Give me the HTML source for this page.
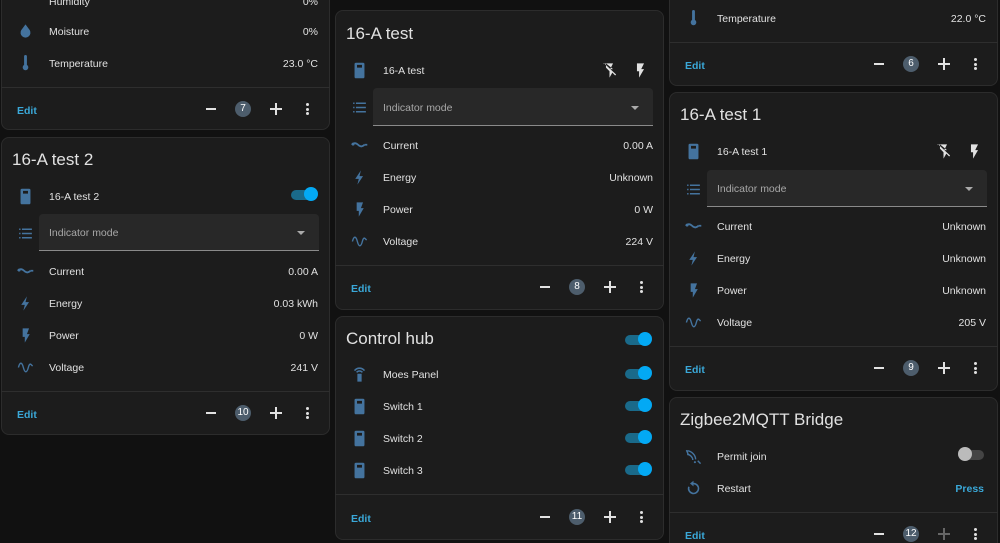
<!DOCTYPE html>
<html><head><meta charset="utf-8"><style>
html,body{margin:0;width:1000px;height:543px;overflow:hidden}
body{background:#111;font-family:"Liberation Sans",sans-serif;color:#e1e1e1;position:relative}
.c{position:absolute;background:#1c1c1c;border:1px solid #2c2c2c;border-radius:8px;box-sizing:border-box}
.d{position:absolute;height:1px;background:#2e2e2e}
.t{position:absolute;font-size:10.5px;line-height:14px;height:14px;white-space:nowrap;margin-top:2px}
.v{position:absolute;font-size:10.5px;line-height:14px;height:14px;text-align:right;white-space:nowrap;margin-top:2px}
.h{position:absolute;font-size:17px;line-height:20px;white-space:nowrap}
.e{position:absolute;font-size:10.5px;line-height:14px;color:#3aa8d8;font-weight:bold;margin-top:2px}
.i{position:absolute;width:17px;height:17px;margin-top:1px}
.dd{position:absolute;background:#282828;border-bottom:1px solid #8a8a8a;border-radius:4px 4px 0 0;box-sizing:border-box}
.dd span{position:absolute;left:10px;top:50%;margin-top:-6px;font-size:10.5px;line-height:14px;color:#a8a8a8}
.dd b{position:absolute;right:14px;top:50%;margin-top:-1px;border-left:4px solid transparent;border-right:4px solid transparent;border-top:4px solid #aaa}
.tg{position:absolute;width:26px;height:12px}
.tg:before{content:"";position:absolute;left:0;top:1px;width:24px;height:10px;border-radius:5px;background:#1a6a8a}
.tg:after{content:"";position:absolute;right:-1px;top:-2px;width:14px;height:14px;border-radius:50%;background:#03a9f4}
.tg.off:before{background:#444}
.tg.off:after{right:auto;left:-2px;background:#bbb}
.m{position:absolute;width:10px;height:1.5px;background:#e1e1e1}
.p{position:absolute;width:12px;height:12px}
.p:before{content:"";position:absolute;left:0;top:5px;width:12px;height:1.5px;background:#e1e1e1}
.p:after{content:"";position:absolute;left:5.25px;top:0;width:1.5px;height:12px;background:#e1e1e1}
.p.dim:before,.p.dim:after{background:#666}
.bd{position:absolute;width:16px;height:16px;border-radius:50%;background:#4d5d6c;font-size:10px;line-height:16px;text-align:center;color:#fff}
.k{position:absolute;width:3px;height:12px}
.k i{display:block;width:3px;height:3px;border-radius:50%;background:#e1e1e1;margin-bottom:1.5px}
</style></head><body>
<svg width="0" height="0" style="position:absolute"><defs>
<symbol id="sw" viewBox="0 0 24 24"><path fill="#44739e" d="M7 1h10a2 2 0 0 1 2 2v18a2 2 0 0 1-2 2H7a2 2 0 0 1-2-2V3a2 2 0 0 1 2-2zm1.5 3v4h7V4z"/></symbol>
<symbol id="ls" viewBox="0 0 24 24"><path fill="#44739e" d="M3 5h2v2H3zm4 0h14v2H7zM3 11h2v2H3zm4 0h14v2H7zM3 17h2v2H3zm4 0h14v2H7z"/></symbol>
<symbol id="cu" viewBox="0 0 24 24"><path fill="none" stroke="#44739e" stroke-width="2.5" d="M1 11c3-3 6-3 9 0s6 3 9 0M19 11h4"/><circle cx="3" cy="10" r="2" fill="#44739e"/></symbol>
<symbol id="fl" viewBox="0 0 24 24"><path fill="#44739e" d="M14 2L6 14h5l-2 8 8-12h-5z"/></symbol>
<symbol id="fl2" viewBox="0 0 24 24"><path fill="#44739e" d="M8 2v12h3v8l7-12h-4l3-8z"/></symbol>
<symbol id="fw" viewBox="0 0 24 24"><path fill="#e1e1e1" d="M7 2v11h3v9l7-12h-4l4-8z"/></symbol>
<symbol id="fo" viewBox="0 0 24 24"><path fill="#e1e1e1" d="M7 2v6l5 5v9l4-7 4 4 1.3-1.3L4.3 1.7 3 3zm10 8h-4l4-8H7z"/></symbol>
<symbol id="si" viewBox="0 0 24 24"><path fill="none" stroke="#44739e" stroke-width="2" d="M2 12c2-8 5-8 7 0s5 8 7 0 4-4 6-2"/></symbol>
<symbol id="th" viewBox="0 0 24 24"><path fill="#44739e" d="M10 2a2 2 0 0 1 4 0v12a4 4 0 1 1-4 0z"/></symbol>
<symbol id="dr" viewBox="0 0 24 24"><path fill="#44739e" d="M12 2l6 8a7 7 0 1 1-12 0z"/></symbol>
<symbol id="rm" viewBox="0 0 24 24"><path fill="#44739e" d="M12 2a10 10 0 0 1 8 4l-2 1a8 8 0 0 0-12 0L4 6a10 10 0 0 1 8-4zm0 4a6 6 0 0 1 5 2.5l-2 1a4 4 0 0 0-6 0l-2-1A6 6 0 0 1 12 6zM9 11h6v11H9z"/></symbol>
<symbol id="zb" viewBox="0 0 24 24"><path fill="none" stroke="#44739e" stroke-width="2" d="M3 4c6 0 12 6 12 12M3 9c4 0 8 4 8 8M2 3l3 7M18 18l4 4"/><circle cx="14" cy="20" r="1.5" fill="#44739e"/></symbol>
<symbol id="rs" viewBox="0 0 24 24"><path fill="none" stroke="#44739e" stroke-width="2.2" d="M12 5a7 7 0 1 1-6.5 4.5"/><path fill="#44739e" d="M12 1v8l-5-4z"/></symbol>
</defs></svg>

<div class="c" style="left:1px;top:-20px;width:329px;height:150px"></div>
<div class="t" style="left:49px;top:-7px">Humidity</div><div class="v" style="right:682px;top:-7px">0%</div>
<svg class="i" style="left:17px;top:22px"><use href="#dr"/></svg><div class="t" style="left:49px;top:23px">Moisture</div><div class="v" style="right:682px;top:23px">0%</div>
<svg class="i" style="left:17px;top:54px"><use href="#th"/></svg><div class="t" style="left:49px;top:55px">Temperature</div><div class="v" style="right:682px;top:55px">23.0 °C</div>
<div class="d" style="left:1px;top:87px;width:329px"></div>
<div class="e" style="left:17px;top:102px">Edit</div>
<div class="m" style="left:206px;top:108px"></div><div class="bd" style="left:235px;top:101px">7</div><div class="p" style="left:270px;top:103px"></div><div class="k" style="left:306px;top:103px"><i></i><i></i><i></i></div>

<div class="c" style="left:1px;top:137px;width:329px;height:298px"></div>
<div class="h" style="left:12px;top:150px">16-A test 2</div>
<svg class="i" style="left:17px;top:187px"><use href="#sw"/></svg><div class="t" style="left:49px;top:188px">16-A test 2</div><div class="tg" style="left:291px;top:189px"></div>
<svg class="i" style="left:17px;top:224px"><use href="#ls"/></svg><div class="dd" style="left:39px;top:214px;width:280px;height:37px"><span>Indicator mode</span><b></b></div>
<svg class="i" style="left:17px;top:262px"><use href="#cu"/></svg><div class="t" style="left:49px;top:263px">Current</div><div class="v" style="right:682px;top:263px">0.00 A</div>
<svg class="i" style="left:17px;top:294px"><use href="#fl"/></svg><div class="t" style="left:49px;top:295px">Energy</div><div class="v" style="right:682px;top:295px">0.03 kWh</div>
<svg class="i" style="left:17px;top:326px"><use href="#fl2"/></svg><div class="t" style="left:49px;top:327px">Power</div><div class="v" style="right:682px;top:327px">0 W</div>
<svg class="i" style="left:17px;top:358px"><use href="#si"/></svg><div class="t" style="left:49px;top:359px">Voltage</div><div class="v" style="right:682px;top:359px">241 V</div>
<div class="d" style="left:1px;top:391px;width:329px"></div>
<div class="e" style="left:17px;top:406px">Edit</div>
<div class="m" style="left:206px;top:412px"></div><div class="bd" style="left:235px;top:405px">10</div><div class="p" style="left:270px;top:407px"></div><div class="k" style="left:306px;top:407px"><i></i><i></i><i></i></div>

<div class="c" style="left:335px;top:10px;width:329px;height:300px"></div>
<div class="h" style="left:346px;top:24px">16-A test</div>
<svg class="i" style="left:351px;top:61px"><use href="#sw"/></svg><div class="t" style="left:383px;top:62px">16-A test</div>
<svg class="i" style="left:601px;top:61px"><use href="#fo"/></svg><svg class="i" style="left:632px;top:61px"><use href="#fw"/></svg>
<svg class="i" style="left:351px;top:98px"><use href="#ls"/></svg><div class="dd" style="left:373px;top:88px;width:280px;height:38px"><span>Indicator mode</span><b></b></div>
<svg class="i" style="left:351px;top:136px"><use href="#cu"/></svg><div class="t" style="left:383px;top:137px">Current</div><div class="v" style="right:347px;top:137px">0.00 A</div>
<svg class="i" style="left:351px;top:168px"><use href="#fl"/></svg><div class="t" style="left:383px;top:169px">Energy</div><div class="v" style="right:347px;top:169px">Unknown</div>
<svg class="i" style="left:351px;top:200px"><use href="#fl2"/></svg><div class="t" style="left:383px;top:201px">Power</div><div class="v" style="right:347px;top:201px">0 W</div>
<svg class="i" style="left:351px;top:232px"><use href="#si"/></svg><div class="t" style="left:383px;top:233px">Voltage</div><div class="v" style="right:347px;top:233px">224 V</div>
<div class="d" style="left:335px;top:265px;width:329px"></div>
<div class="e" style="left:351px;top:280px">Edit</div>
<div class="m" style="left:540px;top:286px"></div><div class="bd" style="left:569px;top:279px">8</div><div class="p" style="left:604px;top:281px"></div><div class="k" style="left:640px;top:281px"><i></i><i></i><i></i></div>

<div class="c" style="left:335px;top:316px;width:329px;height:224px"></div>
<div class="h" style="left:346px;top:329px">Control hub</div><div class="tg" style="left:625px;top:334px"></div>
<svg class="i" style="left:351px;top:365px"><use href="#rm"/></svg><div class="t" style="left:383px;top:366px">Moes Panel</div><div class="tg" style="left:625px;top:368px"></div>
<svg class="i" style="left:351px;top:397px"><use href="#sw"/></svg><div class="t" style="left:383px;top:398px">Switch 1</div><div class="tg" style="left:625px;top:400px"></div>
<svg class="i" style="left:351px;top:429px"><use href="#sw"/></svg><div class="t" style="left:383px;top:430px">Switch 2</div><div class="tg" style="left:625px;top:432px"></div>
<svg class="i" style="left:351px;top:461px"><use href="#sw"/></svg><div class="t" style="left:383px;top:462px">Switch 3</div><div class="tg" style="left:625px;top:464px"></div>
<div class="d" style="left:335px;top:494px;width:329px"></div>
<div class="e" style="left:351px;top:510px">Edit</div>
<div class="m" style="left:540px;top:516px"></div><div class="bd" style="left:569px;top:509px">11</div><div class="p" style="left:604px;top:511px"></div><div class="k" style="left:640px;top:511px"><i></i><i></i><i></i></div>

<div class="c" style="left:669px;top:-20px;width:329px;height:106px"></div>
<svg class="i" style="left:685px;top:9px"><use href="#th"/></svg><div class="t" style="left:717px;top:10px">Temperature</div><div class="v" style="right:14px;top:10px">22.0 °C</div>
<div class="d" style="left:669px;top:42px;width:329px"></div>
<div class="e" style="left:685px;top:57px">Edit</div>
<div class="m" style="left:874px;top:63px"></div><div class="bd" style="left:903px;top:56px">6</div><div class="p" style="left:938px;top:58px"></div><div class="k" style="left:974px;top:58px"><i></i><i></i><i></i></div>

<div class="c" style="left:669px;top:92px;width:329px;height:299px"></div>
<div class="h" style="left:680px;top:105px">16-A test 1</div>
<svg class="i" style="left:685px;top:142px"><use href="#sw"/></svg><div class="t" style="left:717px;top:143px">16-A test 1</div>
<svg class="i" style="left:935px;top:142px"><use href="#fo"/></svg><svg class="i" style="left:966px;top:142px"><use href="#fw"/></svg>
<svg class="i" style="left:685px;top:180px"><use href="#ls"/></svg><div class="dd" style="left:707px;top:170px;width:280px;height:37px"><span>Indicator mode</span><b></b></div>
<svg class="i" style="left:685px;top:217px"><use href="#cu"/></svg><div class="t" style="left:717px;top:218px">Current</div><div class="v" style="right:14px;top:218px">Unknown</div>
<svg class="i" style="left:685px;top:249px"><use href="#fl"/></svg><div class="t" style="left:717px;top:250px">Energy</div><div class="v" style="right:14px;top:250px">Unknown</div>
<svg class="i" style="left:685px;top:281px"><use href="#fl2"/></svg><div class="t" style="left:717px;top:282px">Power</div><div class="v" style="right:14px;top:282px">Unknown</div>
<svg class="i" style="left:685px;top:313px"><use href="#si"/></svg><div class="t" style="left:717px;top:314px">Voltage</div><div class="v" style="right:14px;top:314px">205 V</div>
<div class="d" style="left:669px;top:346px;width:329px"></div>
<div class="e" style="left:685px;top:361px">Edit</div>
<div class="m" style="left:874px;top:367px"></div><div class="bd" style="left:903px;top:360px">9</div><div class="p" style="left:938px;top:362px"></div><div class="k" style="left:974px;top:362px"><i></i><i></i><i></i></div>

<div class="c" style="left:669px;top:397px;width:329px;height:160px"></div>
<div class="h" style="left:680px;top:410px">Zigbee2MQTT Bridge</div>
<svg class="i" style="left:685px;top:447px"><use href="#zb"/></svg><div class="t" style="left:717px;top:448px">Permit join</div><div class="tg off" style="left:960px;top:449px"></div>
<svg class="i" style="left:685px;top:479px"><use href="#rs"/></svg><div class="t" style="left:717px;top:480px">Restart</div><div class="v" style="right:16px;top:480px;color:#3aa8d8;font-weight:bold">Press</div>
<div class="d" style="left:669px;top:512px;width:329px"></div>
<div class="e" style="left:685px;top:527px">Edit</div>
<div class="m" style="left:874px;top:533px"></div><div class="bd" style="left:903px;top:526px">12</div><div class="p dim" style="left:938px;top:528px"></div><div class="k" style="left:974px;top:528px"><i></i><i></i><i></i></div>
</body></html>
